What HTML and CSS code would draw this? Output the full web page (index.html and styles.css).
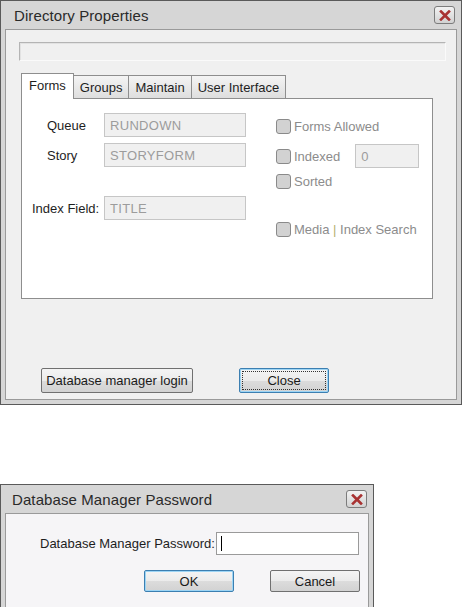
FILE: index.html
```html
<!DOCTYPE html>
<html>
<head>
<meta charset="utf-8">
<link rel="stylesheet" href="styles.css">
</head>
<body>
<div class="page">
  <div class="window main">
    <div class="titlebar">
      <span class="title">Directory Properties</span>
      <span class="xbtn"><svg width="12" height="11" viewBox="0 0 12 11"><path d="M2 1.5 L10 9.5 M10 1.5 L2 9.5" stroke="#a83232" stroke-width="2.6" stroke-linecap="square"/></svg></span>
    </div>
    <div class="frame">
      <div class="client">
        <div class="progress"></div>
        <div class="tabs">
          <div class="tab active">Forms</div>
          <div class="tab">Groups</div>
          <div class="tab">Maintain</div>
          <div class="tab">User Interface</div>
        </div>
        <div class="panel">
          <div class="leftcol">
            <div class="frow r1"><span class="lbl l-q">Queue</span><span class="field">RUNDOWN</span></div>
            <div class="frow r2"><span class="lbl l-q">Story</span><span class="field">STORYFORM</span></div>
            <div class="frow r3"><span class="lbl l-i">Index Field:</span><span class="field">TITLE</span></div>
          </div>
          <div class="rightcol">
            <div class="chk c1"><span class="box"></span><span>Forms Allowed</span></div>
            <div class="chk c2"><span class="box"></span><span class="idx">Indexed</span><span class="field small">0</span></div>
            <div class="chk c3"><span class="box"></span><span>Sorted</span></div>
            <div class="chk c4"><span class="box"></span><span>Media <span class="bar">|</span> Index Search</span></div>
          </div>
        </div>
        <div class="buttons">
          <div class="btn login">Database manager login</div>
          <div class="btn close"><span class="focus">Close</span></div>
        </div>
      </div>
    </div>
  </div>

  <div class="window pwd">
    <div class="titlebar t2">
      <span class="title">Database Manager Password</span>
      <span class="xbtn"><svg width="12" height="11" viewBox="0 0 12 11"><path d="M2 1.5 L10 9.5 M10 1.5 L2 9.5" stroke="#a83232" stroke-width="2.6" stroke-linecap="square"/></svg></span>
    </div>
    <div class="frame">
      <div class="client c2body">
        <div class="pwrow"><span class="plabel">Database Manager Password:</span><span class="pinput"><span class="caret"></span></span></div>
        <div class="pbtns">
          <div class="btn ok">OK</div>
          <div class="btn cancel">Cancel</div>
        </div>
      </div>
    </div>
  </div>
</div>
</body>
</html>
```
FILE: styles.css
```css
* { box-sizing: border-box; }
html, body { margin: 0; padding: 0; background: #ffffff; }
body { font-family: "Liberation Sans", Arial, sans-serif; color: #1e1e1e; font-size: 13px; }
.page { width: 462px; height: 607px; overflow: hidden; }

.window { border: 1px solid #5a5a5a; background: #d6d6d6; }
.main { width: 462px; height: 405px; display: flex; flex-direction: column; }
.pwd { width: 374px; height: 130px; margin-top: 79px; display: flex; flex-direction: column; }

.titlebar { height: 28px; flex: none; display: flex; align-items: center; justify-content: space-between; padding: 0 6px 0 13px; background: #d6d6d6; }
.title { font-size: 15px; color: #2a2a2a; letter-spacing: 0.1px; }
.t2 .title { padding-left: 0; margin-left: -2px; }
.xbtn { width: 21px; height: 18px; border: 1px solid #7c7c7c; border-radius: 3px; background: linear-gradient(#f2f2f2, #d2d2d2); display: flex; align-items: center; justify-content: center; }

.frame { flex: 1; padding: 0 4px 4px 4px; display: flex; }
.client { flex: 1; border: 1px solid #9a9a9a; background: #f0f0f0; display: flex; flex-direction: column; }

.progress { margin: 12px 10px 0 13px; height: 19px; border: 1px solid #b4b4b4; border-right-color: #fafafa; border-bottom-color: #fafafa; background: #f0f0f0; box-shadow: inset 1px 1px 0 #e2e2e2; }

.tabs { display: flex; margin: 11px 0 0 15px; align-items: flex-end; height: 26px; position: relative; z-index: 1; }
.tab { height: 23px; padding: 0 6px; border: 1px solid #8e8e8e; border-bottom: none; border-left: none; background: linear-gradient(#f4f4f4, #dedede); display: flex; align-items: center; font-size: 13px; }
.tab:first-child { border-left: 1px solid #8e8e8e; }
.tab.active { height: 26px; background: #ffffff; padding: 0 7px 3px 7px; border-left: 1px solid #8e8e8e; border-right: 1px solid #8e8e8e; margin-bottom: -1px; }
.tab.active + .tab { border-left: none; }

.panel { margin: 0 23px 0 15px; height: 201px; border: 1px solid #8e8e8e; background: #ffffff; display: flex; }
.leftcol { width: 254px; display: flex; flex-direction: column; }
.frow { display: flex; align-items: center; height: 24px; }
.r1 { margin-top: 14px; }
.r2 { margin-top: 6px; }
.r3 { margin-top: 29px; }
.lbl { display: block; }
.l-q { width: 82px; padding-left: 25px; }
.l-i { width: 82px; padding-left: 10px; }
.field { width: 142px; height: 24px; border: 1px solid #c6c6c6; background: #f0f0f0; color: #9c9c9c; padding-left: 5px; display: flex; align-items: center; font-size: 13px; letter-spacing: 0.3px; }
.field.small { width: 64px; margin-left: 15px; }

.rightcol { display: flex; flex-direction: column; color: #8c8c8c; }
.chk { display: flex; align-items: center; height: 16px; }
.box { width: 15px; height: 15px; border: 1px solid #8a8a8a; border-radius: 3px; background: #d2d2d2; margin-right: 3px; flex: none; }
.c1 { margin-top: 19px; }
.c2 { margin-top: 10px; height: 24px; }
.c3 { margin-top: 5px; }
.c4 { margin-top: 32px; }
.bar { color: #b8b070; }

.buttons { display: flex; margin-top: 69px; padding-left: 35px; }
.btn { height: 25px; border: 1px solid #707070; border-radius: 2px; background: linear-gradient(#f4f4f4 0%, #ebebeb 50%, #dcdcdc 51%, #d2d2d2 100%); display: flex; align-items: center; justify-content: center; font-size: 13px; color: #1a1a1a; }
.login { width: 152px; }
.close { width: 90px; margin-left: 46px; border: 1px solid #3c7fb1; box-shadow: inset 0 0 0 1px #9dd5f5; padding: 2px; }
.focus { flex: 1; align-self: stretch; border: 1px dotted #333; display: flex; align-items: center; justify-content: center; }

.c2body { background: #f6f5f7; }
.pwrow { display: flex; align-items: center; margin-top: 18px; padding-left: 34px; }
.plabel { width: 176px; }
.pinput { width: 143px; height: 23px; border: 1px solid #9a9a9a; background: #ffffff; display: flex; align-items: center; padding-left: 4px; }
.caret { width: 1px; height: 15px; background: #000; }
.pbtns { display: flex; margin-top: 15px; padding-left: 138px; }
.ok { width: 90px; height: 22px; border: 1px solid #3c7fb1; box-shadow: inset 0 0 0 1px #9dd5f5; }
.cancel { width: 90px; height: 22px; margin-left: 36px; }
```
